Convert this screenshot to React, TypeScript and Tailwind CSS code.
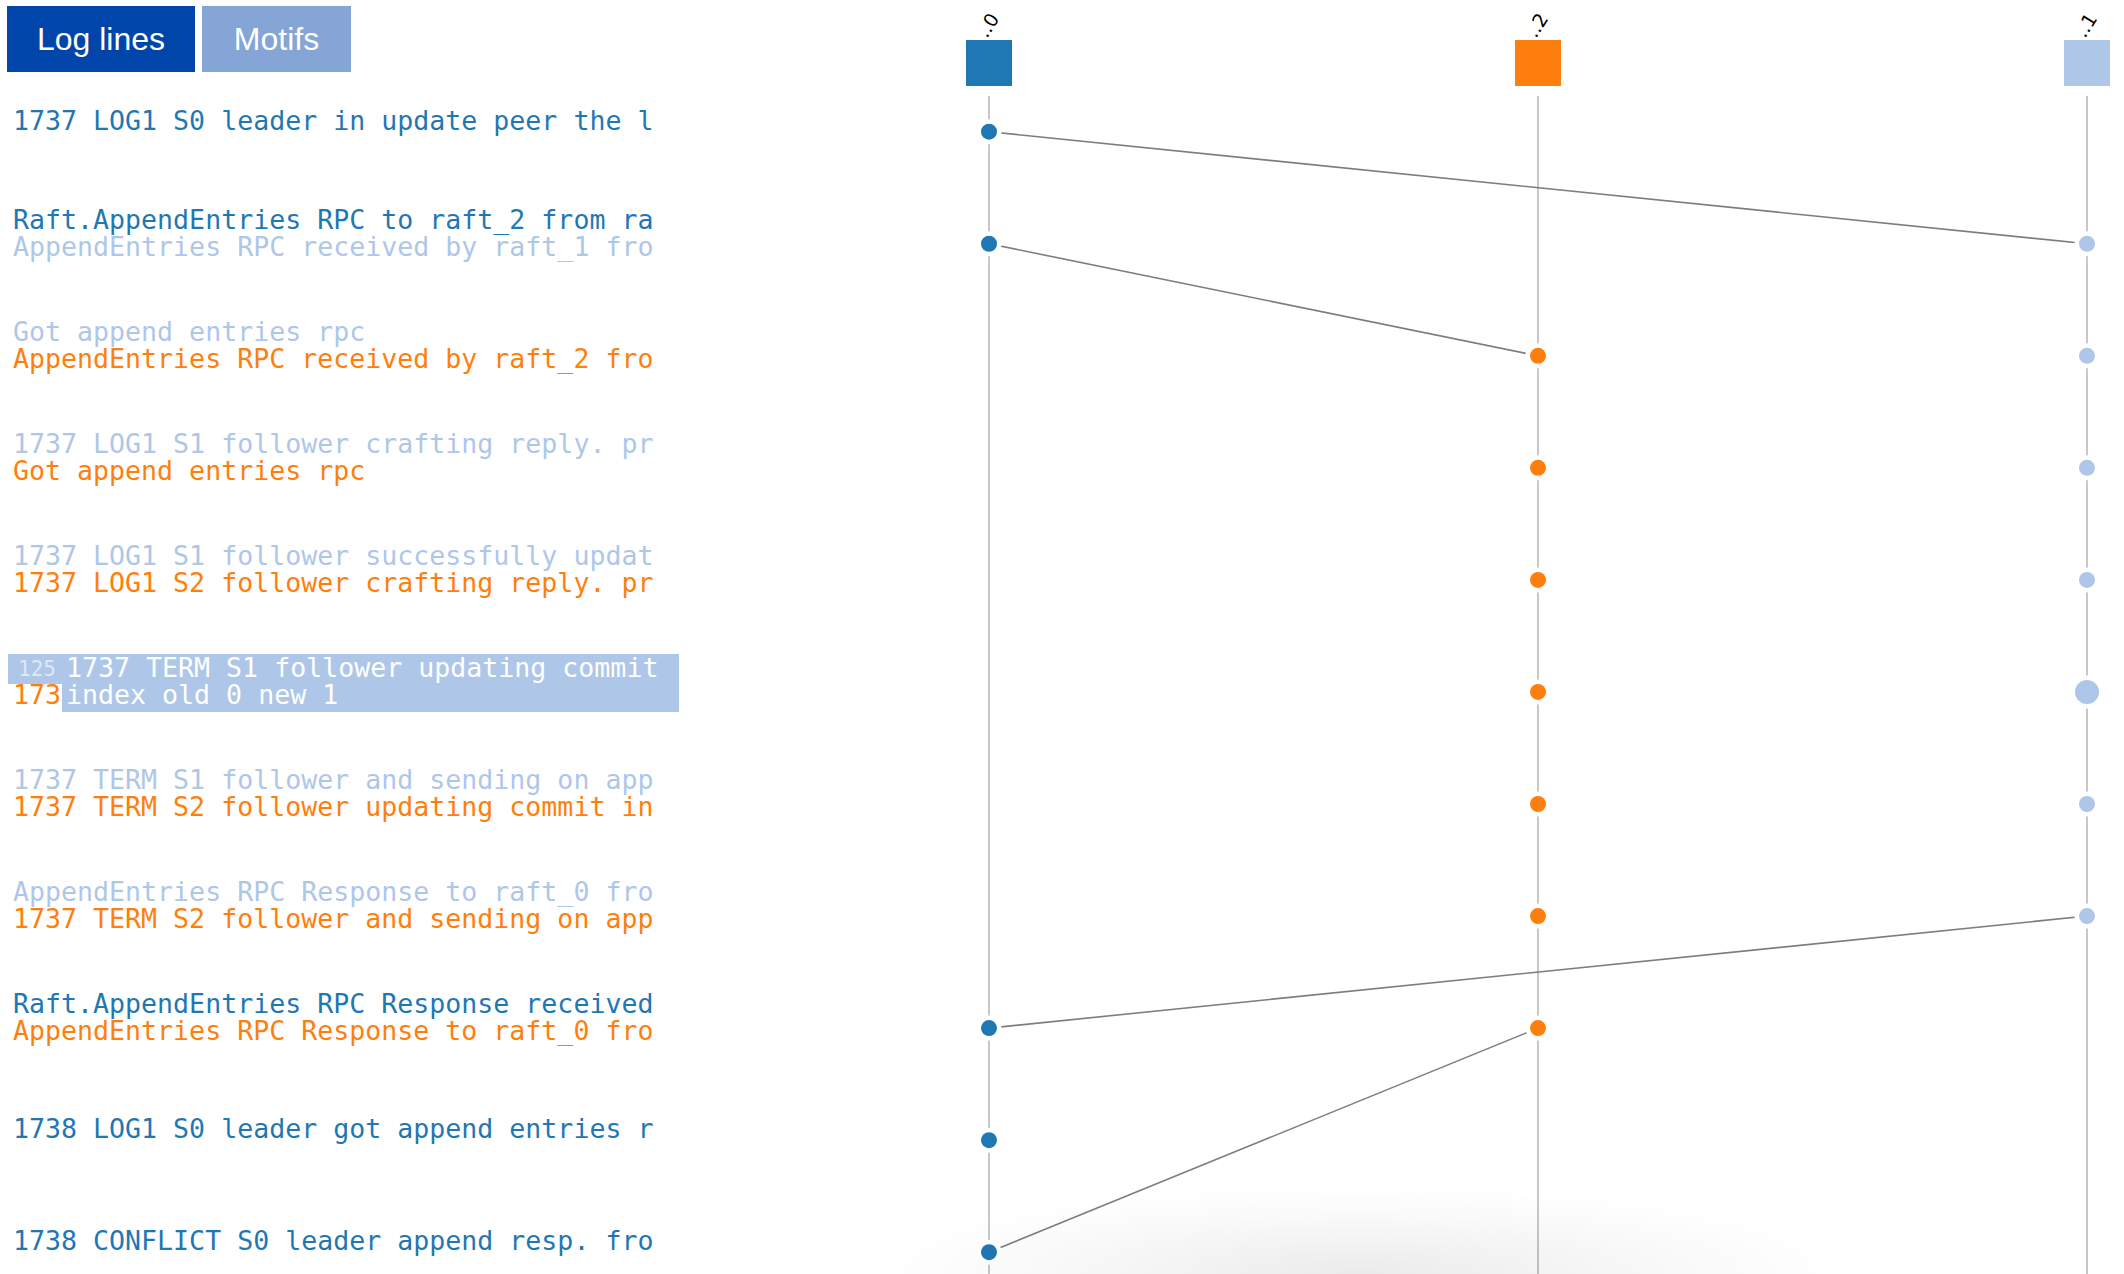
import React from "react";

const COLORS = ["#1f77b4", "#aec7e8", "#ff7f0e"];

const rows: [number, string][][] = [
  [[0, "1737 LOG1 S0 leader in update peer the l"]],
  [
    [0, "Raft.AppendEntries RPC to raft_2 from ra"],
    [1, "AppendEntries RPC received by raft_1 fro"],
  ],
  [
    [1, "Got append entries rpc"],
    [2, "AppendEntries RPC received by raft_2 fro"],
  ],
  [
    [1, "1737 LOG1 S1 follower crafting reply. pr"],
    [2, "Got append entries rpc"],
  ],
  [
    [1, "1737 LOG1 S1 follower successfully updat"],
    [2, "1737 LOG1 S2 follower crafting reply. pr"],
  ],
  [
    [1, "1737 TERM S1 follower updating commit in"],
    [2, "1737 LOG1 S2 follower successfully updat"],
  ],
  [
    [1, "1737 TERM S1 follower and sending on app"],
    [2, "1737 TERM S2 follower updating commit in"],
  ],
  [
    [1, "AppendEntries RPC Response to raft_0 fro"],
    [2, "1737 TERM S2 follower and sending on app"],
  ],
  [
    [0, "Raft.AppendEntries RPC Response received"],
    [2, "AppendEntries RPC Response to raft_0 fro"],
  ],
  [[0, "1738 LOG1 S0 leader got append entries r"]],
  [[0, "1738 CONFLICT S0 leader append resp. fro"]],
];

const OFF = 700;
const nodeX: Record<number, number> = { 0: 989 - OFF, 2: 1538 - OFF, 1: 2087 - OFF };
const rowY = (i: number) => 131.7 + 112.05 * i;

const events: { n: number; r: number; big?: boolean }[] = [
  { n: 0, r: 0 },
  { n: 0, r: 1 },
  { n: 0, r: 8 },
  { n: 0, r: 9 },
  { n: 0, r: 10 },
  { n: 2, r: 2 },
  { n: 2, r: 3 },
  { n: 2, r: 4 },
  { n: 2, r: 5 },
  { n: 2, r: 6 },
  { n: 2, r: 7 },
  { n: 2, r: 8 },
  { n: 1, r: 1 },
  { n: 1, r: 2 },
  { n: 1, r: 3 },
  { n: 1, r: 4 },
  { n: 1, r: 5, big: true },
  { n: 1, r: 6 },
  { n: 1, r: 7 },
];

const messages: [number, number, number, number][] = [
  [0, 0, 1, 1],
  [0, 1, 2, 2],
  [1, 7, 0, 8],
  [2, 8, 0, 10],
];

const hosts = [
  { n: 0, label: "..0" },
  { n: 2, label: "..2" },
  { n: 1, label: "..1" },
];

function Graph() {
  return (
    <svg width={1424} height={1274} viewBox="0 0 1424 1274" className="block">
      {hosts.map((h) => {
        const x = nodeX[h.n];
        return (
          <g key={h.n}>
            <text
              x={0}
              y={0}
              transform={`translate(${x - 2} 39) rotate(-58)`}
              fontFamily="'DejaVu Sans', sans-serif"
              fontSize={19}
              fill="#000"
            >
              {h.label}
            </text>
            <rect x={x - 23} y={40} width={46} height={46} fill={COLORS[h.n]} />
            <line x1={x} y1={96} x2={x} y2={1274} stroke="#c8c8c8" strokeWidth={2} />
          </g>
        );
      })}
      {messages.map(([a, ra, b, rb], i) => (
        <line
          key={i}
          x1={nodeX[a]}
          y1={rowY(ra)}
          x2={nodeX[b]}
          y2={rowY(rb)}
          stroke="#7d7d7d"
          strokeWidth={1.6}
        />
      ))}
      {events.map((e, i) => {
        const x = nodeX[e.n];
        const y = rowY(e.r);
        const r = e.big ? 12 : 8;
        return (
          <g key={i}>
            <circle cx={x} cy={y} r={r + 4.5} fill="#fff" />
            <circle cx={x} cy={y} r={r} fill={COLORS[e.n]} />
          </g>
        );
      })}
    </svg>
  );
}

export default function App() {
  const mono = { fontFamily: "'DejaVu Sans Mono', 'Liberation Mono', monospace" };
  return (
    <div className="relative flex w-[2124px] h-[1274px] overflow-hidden bg-white">
      <div className="w-[700px] shrink-0 flex flex-col">
        <div
          className="flex gap-[7px] pl-[7px] pt-[6px]"
          style={{ fontFamily: "'Liberation Sans', Arial, sans-serif" }}
        >
          <div className="h-[66px] w-[188px] bg-[#0046aa] text-white text-[32px] flex items-center justify-center">
            Log lines
          </div>
          <div className="h-[66px] w-[149px] bg-[#84a5d5] text-white text-[32px] flex items-center justify-center">
            Motifs
          </div>
        </div>
        <div className="-mt-[7.5px] pl-[13px]" style={mono}>
          {rows.map((row, i) => (
            <div key={i} className="h-[112.05px] flex flex-col justify-center">
              <div className="relative">
                {row.map(([n, t], j) => (
                  <div
                    key={j}
                    className="text-[26.6px] leading-[27px] whitespace-pre"
                    style={{ color: COLORS[n] }}
                  >
                    {t}
                  </div>
                ))}
                {i === 5 && (
                  <div className="absolute left-[-5px] top-0 w-[671px] flex items-start">
                    <div className="w-[54px] h-[30px] bg-[#aec7e8] text-[21px] leading-[27px] pt-[2px] pr-[6px] text-right text-[#dfe8f4]">
                      125
                    </div>
                    <div className="flex-1 bg-[#aec7e8] text-white text-[26.6px] leading-[27px] pl-[4px] pb-[4px]">
                      1737 TERM S1 follower updating commit index old 0 new 1
                    </div>
                  </div>
                )}
              </div>
            </div>
          ))}
        </div>
      </div>
      <div className="flex-1">
        <Graph />
      </div>
      <div className="pointer-events-none absolute bottom-0 left-[860px] w-[1000px] h-[90px] bg-[radial-gradient(ellipse_at_50%_100%,rgba(0,0,0,0.08)_0%,rgba(0,0,0,0.025)_45%,rgba(0,0,0,0)_70%)]" />
    </div>
  );
}
